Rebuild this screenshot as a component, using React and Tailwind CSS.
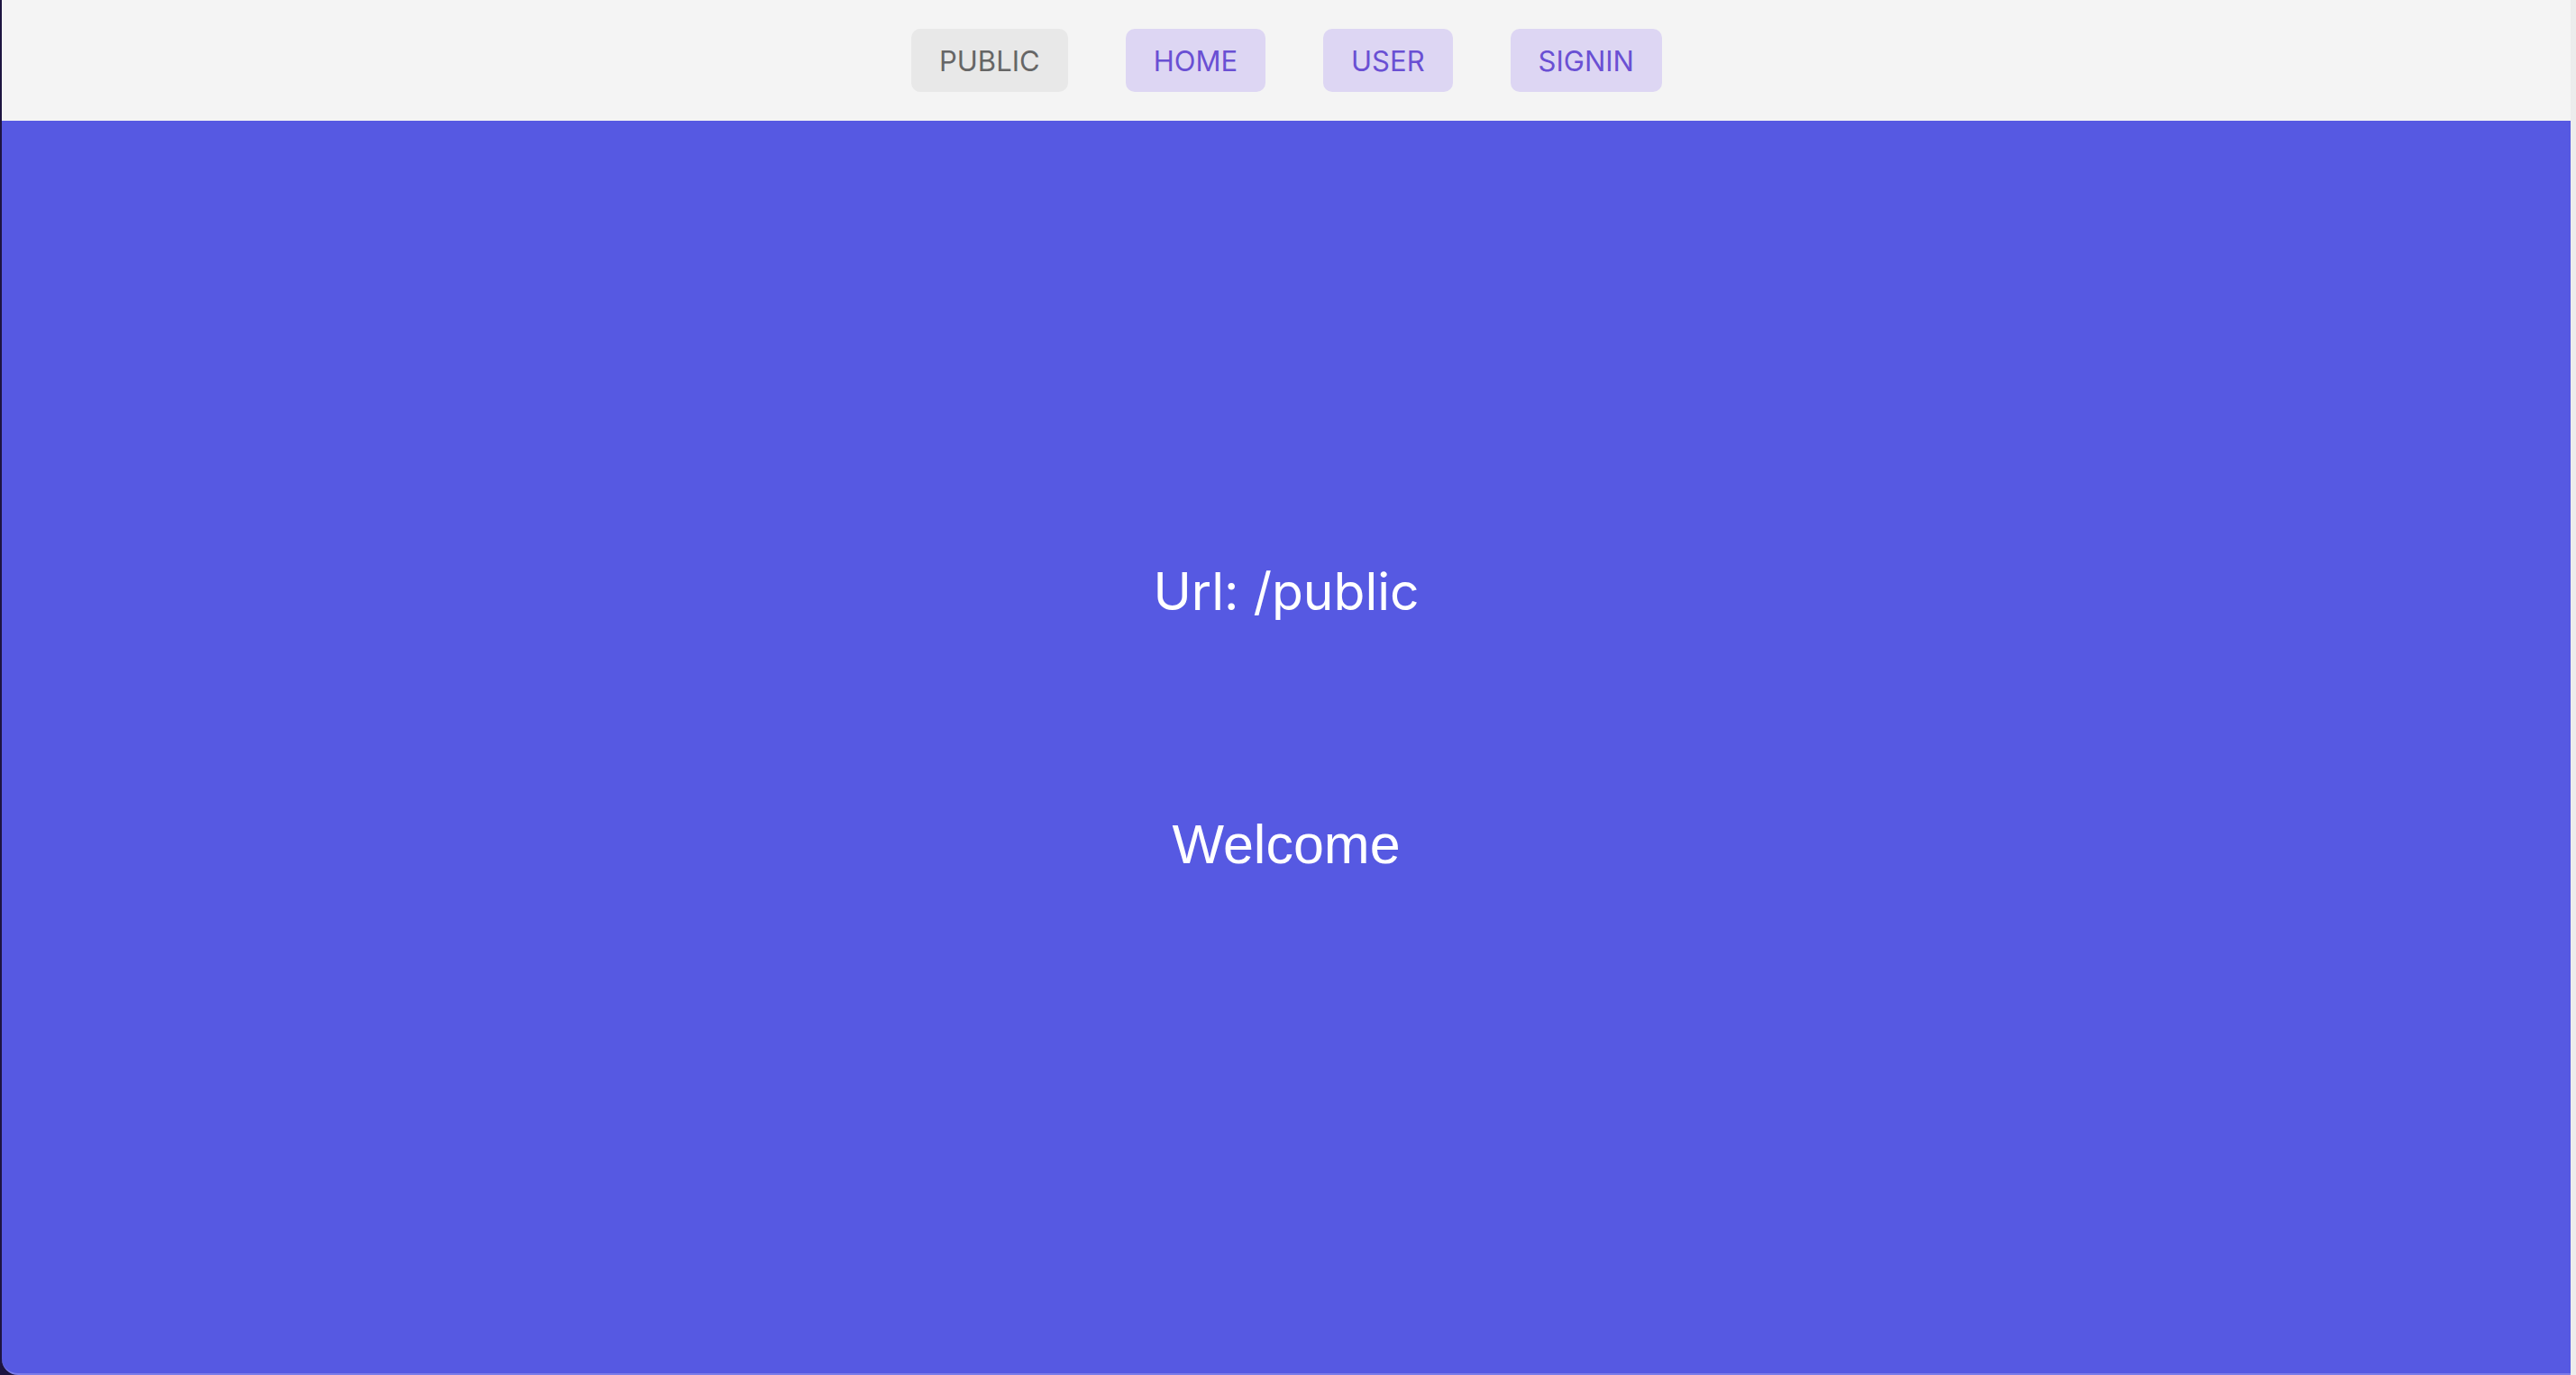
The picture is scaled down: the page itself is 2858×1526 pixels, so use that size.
import React from "react";

const links = [
  { label: "PUBLIC", active: true },
  { label: "HOME", active: false },
  { label: "USER", active: false },
  { label: "SIGNIN", active: false },
];

const NavButton = ({ label, active }) => (
  <button
    className={
      active
        ? "h-[70px] px-[31px] rounded-[10px] bg-[#e8e8e8] text-[#666666] text-[31px] leading-none"
        : "h-[70px] px-[31px] rounded-[10px] bg-[#ddd6f3] text-[#6a50d3] text-[31px] leading-none"
    }
  >
    {label}
  </button>
);

export default function App() {
  return (
    <div
      className="w-full h-[1526px] flex bg-[#1d1440] pl-[2px] overflow-hidden"
      style={{ fontFamily: "Inter, 'Noto Sans', sans-serif" }}
    >
      <div className="flex-1 flex flex-col rounded-bl-[18px] overflow-hidden border-b-2 border-[#7b7ce8] bg-[#5659e2]">
        <nav className="h-[134px] shrink-0 bg-[#f4f4f4] flex items-center justify-center gap-16 pl-[1px]">
          {links.map((l) => (
            <NavButton key={l.label} {...l} />
          ))}
        </nav>
        <main className="flex-1 flex flex-col items-center pt-[489px] text-white">
          <h1 className="text-[57px] leading-[68px] font-normal">Url: /public</h1>
          <p
            className="mt-[210px] text-[61px] leading-[72px]"
            style={{ fontFamily: "'Liberation Sans', Arial, sans-serif" }}
          >
            Welcome
          </p>
        </main>
      </div>
      <div className="w-[6px] shrink-0 bg-[#ececec]" />
    </div>
  );
}
